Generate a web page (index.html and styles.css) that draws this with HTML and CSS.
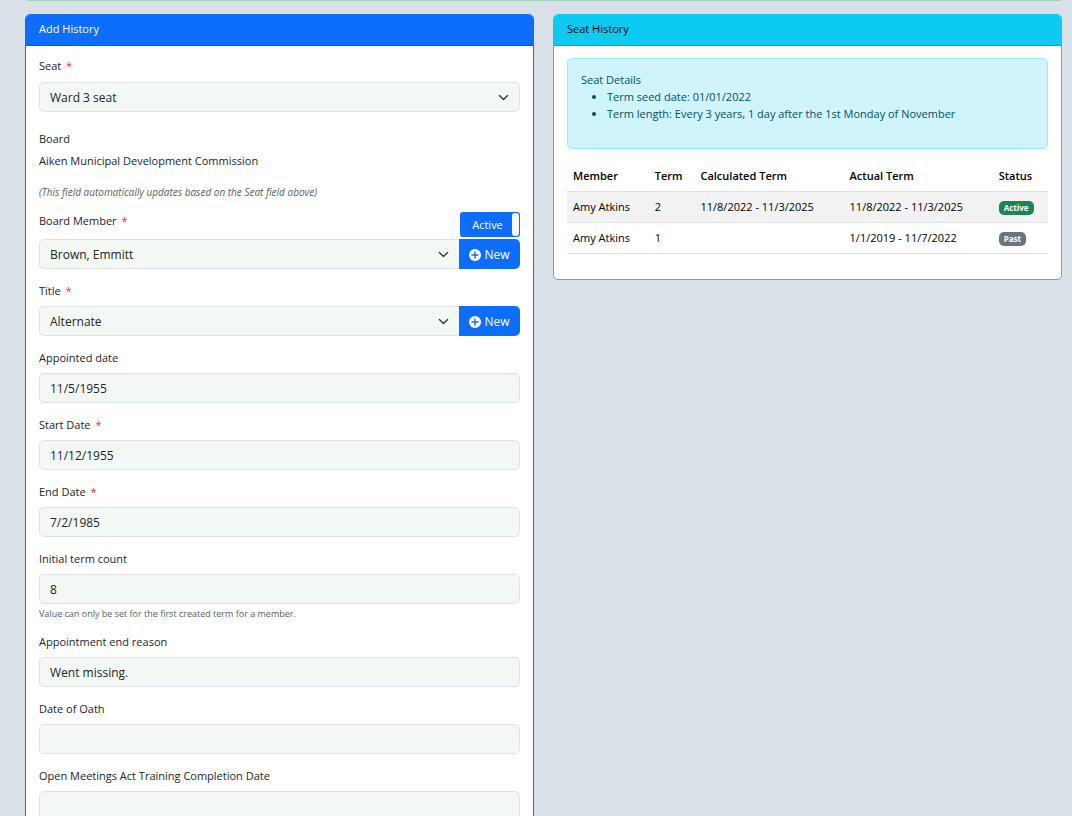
FILE: index.html
```html
<!DOCTYPE html>
<html lang="en">
<head>
<meta charset="utf-8">
<title>Add History</title>
<link rel="stylesheet" href="styles.css">
</head>
<body>
<div class="notice-edge"></div>
<main class="columns">
  <section class="card card-primary">
    <h2 class="card-header">Add History</h2>
    <form class="card-body form">
      <div class="field field-seat">
        <label for="seat">Seat <span class="req">*</span></label>
        <select id="seat" class="control select"><option>Ward 3 seat</option></select>
      </div>
      <div class="board">
        <div>Board</div>
        <div class="board-name">Aiken Municipal Development Commission</div>
        <em class="board-note">(This field automatically updates based on the Seat field above)</em>
      </div>
      <div class="field field-member">
        <div class="label-row">
          <label for="member">Board Member <span class="req">*</span></label>
          <button type="button" class="toggle" aria-pressed="true"><span class="toggle-on">Active</span><span class="toggle-handle"></span></button>
        </div>
        <div class="group">
          <select id="member" class="control select"><option>Brown, Emmitt</option></select>
          <button type="button" class="btn-new"><svg class="plus" viewBox="0 0 12 12" aria-hidden="true"><circle cx="6" cy="6" r="6" fill="#fff"/><path d="M6 3v6M3 6h6" stroke="#0d6efd" stroke-width="1.4" stroke-linecap="round"/></svg>New</button>
        </div>
      </div>
      <div class="field">
        <label for="title">Title <span class="req">*</span></label>
        <div class="group">
          <select id="title" class="control select"><option>Alternate</option></select>
          <button type="button" class="btn-new"><svg class="plus" viewBox="0 0 12 12" aria-hidden="true"><circle cx="6" cy="6" r="6" fill="#fff"/><path d="M6 3v6M3 6h6" stroke="#0d6efd" stroke-width="1.4" stroke-linecap="round"/></svg>New</button>
        </div>
      </div>
      <div class="field">
        <label for="appointed">Appointed date</label>
        <input id="appointed" class="control" type="text" value="11/5/1955">
      </div>
      <div class="field">
        <label for="start">Start Date <span class="req">*</span></label>
        <input id="start" class="control" type="text" value="11/12/1955">
      </div>
      <div class="field">
        <label for="end">End Date <span class="req">*</span></label>
        <input id="end" class="control" type="text" value="7/2/1985">
      </div>
      <div class="field">
        <label for="count">Initial term count</label>
        <input id="count" class="control" type="text" value="8">
        <div class="help">Value can only be set for the first created term for a member.</div>
      </div>
      <div class="field">
        <label for="reason">Appointment end reason</label>
        <input id="reason" class="control" type="text" value="Went missing.">
      </div>
      <div class="field">
        <label for="oath">Date of Oath</label>
        <input id="oath" class="control" type="text">
      </div>
      <div class="field">
        <label for="training">Open Meetings Act Training Completion Date</label>
        <input id="training" class="control" type="text">
      </div>
    </form>
  </section>

  <section class="card card-info">
    <h2 class="card-header">Seat History</h2>
    <div class="card-body">
      <div class="alert">
        Seat Details
        <ul class="details">
          <li>Term seed date: 01/01/2022</li>
          <li>Term length: Every 3 years, 1 day after the 1st Monday of November</li>
        </ul>
      </div>
      <table class="history">
        <thead>
          <tr><th class="c-member">Member</th><th class="c-term">Term</th><th class="c-range">Calculated Term</th><th class="c-range">Actual Term</th><th>Status</th></tr>
        </thead>
        <tbody>
          <tr class="striped"><td>Amy Atkins</td><td>2</td><td>11/8/2022 - 11/3/2025</td><td>11/8/2022 - 11/3/2025</td><td><span class="badge badge-active">Active</span></td></tr>
          <tr><td>Amy Atkins</td><td>1</td><td></td><td>1/1/2019 - 11/7/2022</td><td><span class="badge badge-past">Past</span></td></tr>
        </tbody>
      </table>
    </div>
  </section>
</main>
</body>
</html>
```
FILE: styles.css
```css
* { box-sizing: border-box; }

body {
  margin: 0;
  background: #d9e0e8;
  color: #212529;
  font-family: "Segoe UI", "Open Sans", "Noto Sans", sans-serif;
  font-size: 11px;
  line-height: 17px;
}

html { scrollbar-width: none; }

.notice-edge {
  height: 1px;
  margin: 0 12px 13px 27px;
  background: #a3cfbb;
}

.columns {
  display: grid;
  grid-template-columns: 1fr 1fr;
  gap: 19px;
  align-items: start;
  padding: 0 10px 24px 25px;
}

.card {
  background: #fff;
  border: 1px solid;
  border-radius: 5px;
  overflow: hidden;
}
.card-primary { border-color: #0d6efd; }
.card-info { border-color: #0dcaf0; }

.card-header {
  margin: 0;
  padding: 5px 13px 8px;
  font-size: 11px;
  font-weight: 400;
  line-height: 17px;
  border-bottom: 1px solid;
}
.card-primary .card-header { background: #0d6efd; color: #fff; border-color: #0b5bd1; }
.card-info .card-header { background: #0dcaf0; color: #000; border-color: #0ba7c7; }

.card-body { padding: 12px 13px 25px; }

.form { display: flex; flex-direction: column; gap: 13px; padding-top: 11px; }

.field { display: flex; flex-direction: column; gap: 7px; }
.field-seat { gap: 8px; }
.req { margin-left: 2px; color: #dc3545; }

.control {
  width: 100%;
  min-width: 0;
  height: 30px;
  margin: 0;
  padding: 1px 10px 0;
  border: 1px solid #dee2e6;
  border-radius: 5px;
  background-color: #f4f8f5;
  color: #212529;
  font-family: inherit;
  font-size: 12px;
}

.select {
  appearance: none;
  padding-right: 28px;
  background-image: url("data:image/svg+xml,%3Csvg xmlns='http://www.w3.org/2000/svg' viewBox='0 0 16 16'%3E%3Cpath fill='none' stroke='%23343a40' stroke-linecap='round' stroke-linejoin='round' stroke-width='2' d='m2 5 6 6 6-6'/%3E%3C/svg%3E");
  background-repeat: no-repeat;
  background-position: right 10px center;
  background-size: 11px 11px;
}

.board { margin-top: 5px; }
.board-name { margin-top: 5px; }
.board-note {
  display: block;
  margin-top: 16px;
  color: #595f64;
  font-size: 10px;
  line-height: 14px;
}

.field-member { gap: 2px; }
.label-row { display: flex; justify-content: space-between; }

.toggle {
  display: flex;
  width: 60px;
  height: 25px;
  padding: 1px;
  border: 0;
  border-radius: 3px;
  background: #0d6efd;
  color: #fff;
  font-family: inherit;
  font-size: 11px;
  line-height: 23px;
}
.toggle-on { flex: 1; padding-left: 2px; text-align: center; }
.toggle-handle { width: 7px; height: 23px; border-radius: 3px; background: #f8f9fa; }

.group { display: flex; }
.group .control { flex: 1; border-right: 0; border-radius: 5px 0 0 5px; }

.btn-new {
  display: flex;
  align-items: center;
  justify-content: center;
  gap: 3px;
  width: 61px;
  height: 30px;
  padding: 1px 0 0;
  border: 0;
  border-radius: 0 5px 5px 0;
  background: #0d6efd;
  color: #fff;
  font-family: inherit;
  font-size: 12px;
}
.plus { width: 12px; height: 12px; }

.help {
  margin-top: -3px;
  color: #595f64;
  font-size: 9px;
  line-height: 12px;
}

.alert {
  margin-bottom: 12px;
  padding: 12px 13px;
  border: 1px solid #9eeaf9;
  border-radius: 5px;
  background: #cff4fc;
  color: #055160;
}
.details { margin: 0 0 14px; padding-left: 26px; }

.history {
  width: 100%;
  table-layout: fixed;
  border-collapse: collapse;
  color: #000;
}
.history th,
.history td {
  padding: 6px 6px 7px;
  border-bottom: 1px solid #dee2e6;
  text-align: left;
  white-space: nowrap;
}
.history th { font-weight: 600; }
.c-member { width: 17%; }
.c-term { width: 9.5%; }
.c-range { width: 31%; }
.striped { background: #f2f2f2; }

.badge {
  display: inline-block;
  padding: 3px 5px;
  border-radius: 5px;
  color: #fff;
  font-size: 8px;
  font-weight: 700;
  line-height: 8px;
  vertical-align: middle;
}
.badge-active { background: #198754; }
.badge-past { background: #6c757d; }
```
